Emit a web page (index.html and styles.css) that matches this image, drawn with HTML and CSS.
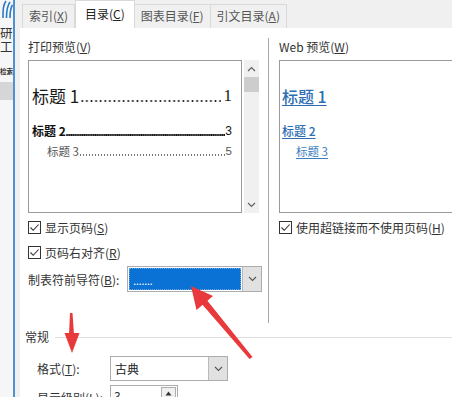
FILE: index.html
```html
<!DOCTYPE html>
<html lang="zh-CN">
<head>
<meta charset="utf-8">
<title>目录</title>
<link rel="stylesheet" href="styles.css">
</head>
<body>
<div class="screen">
  <aside class="side">
    <svg class="logo" width="13" height="18" viewBox="0 0 13 18">
      <path d="M3 18 C3 10 3 5 6 1" fill="none" stroke="#2a7bc6" stroke-width="1.6"/>
      <path d="M6.5 18 C6.5 11 7 6 10 2" fill="none" stroke="#2a7bc6" stroke-width="1.6"/>
      <path d="M10 18 C10 12 10.5 8 12.5 5" fill="none" stroke="#2a7bc6" stroke-width="1.6"/>
    </svg>
    <div class="side-chars">研<br>工</div>
    <div class="side-small">检索</div>
    <div class="side-band"></div>
  </aside>
  <div class="gutter"></div>
  <main class="dialog">
    <nav class="tabs">
      <span class="tab">索引(<u>X</u>)</span>
      <span class="tab active">目录(<u>C</u>)</span>
      <span class="tab">图表目录(<u>F</u>)</span>
      <span class="tab">引文目录(<u>A</u>)</span>
    </nav>
    <section class="panel">
      <div class="top">
        <div class="col-left">
          <div class="label">打印预览(<u>V</u>)</div>
          <div class="preview-wrap">
            <div class="preview print">
              <div class="toc l1"><span class="t">标题 1</span><span class="lead"></span><span class="n">1</span></div>
              <div class="toc l2"><span class="t">标题 2</span><span class="lead"></span><span class="n">3</span></div>
              <div class="toc l3"><span class="t">标题 3</span><span class="lead"></span><span class="n">5</span></div>
            </div>
            <div class="scrollbar">
              <div class="sb-btn">
                <svg width="9" height="6" viewBox="0 0 9 6"><polyline points="1,5 4.5,1.5 8,5" fill="none" stroke="#606060" stroke-width="1.2"/></svg>
              </div>
              <div class="sb-thumb"></div>
              <div class="sb-track"></div>
              <div class="sb-btn">
                <svg width="9" height="6" viewBox="0 0 9 6"><polyline points="1,1 4.5,4.5 8,1" fill="none" stroke="#606060" stroke-width="1.2"/></svg>
              </div>
            </div>
          </div>
          <div class="check">
            <span class="box"><svg width="11" height="11" viewBox="0 0 11 11"><polyline points="1.5,5.5 4.2,8.3 9.6,2.5" fill="none" stroke="#333" stroke-width="1.1"/></svg></span>
            <span>显示页码(<u>S</u>)</span>
          </div>
          <div class="check second">
            <span class="box"><svg width="11" height="11" viewBox="0 0 11 11"><polyline points="1.5,5.5 4.2,8.3 9.6,2.5" fill="none" stroke="#333" stroke-width="1.1"/></svg></span>
            <span>页码右对齐(<u>R</u>)</span>
          </div>
          <div class="field-row">
            <span class="field-label">制表符前导符(<u>B</u>):</span>
            <div class="select leader-select">
              <div class="select-value selected"><span class="leader-dots">.......</span></div>
              <div class="select-btn">
                <svg width="9" height="6" viewBox="0 0 9 6"><polyline points="1,1 4.5,4.5 8,1" fill="none" stroke="#555" stroke-width="1.1"/></svg>
              </div>
            </div>
          </div>
        </div>
        <div class="col-right">
          <div class="label">Web 预览(<u>W</u>)</div>
          <div class="preview web">
            <div class="web-l1">标题 1</div>
            <div class="web-l2">标题 2</div>
            <div class="web-l3">标题 3</div>
          </div>
          <div class="check">
            <span class="box"><svg width="11" height="11" viewBox="0 0 11 11"><polyline points="1.5,5.5 4.2,8.3 9.6,2.5" fill="none" stroke="#333" stroke-width="1.1"/></svg></span>
            <span>使用超链接而不使用页码(<u>H</u>)</span>
          </div>
        </div>
      </div>
      <div class="group">
        <div class="group-title"><span>常规</span></div>
        <div class="form-row">
          <span class="form-label">格式(<u>T</u>):</span>
          <div class="select format-select">
            <div class="select-value">古典</div>
            <div class="select-btn">
              <svg width="9" height="6" viewBox="0 0 9 6"><polyline points="1,1 4.5,4.5 8,1" fill="none" stroke="#555" stroke-width="1.1"/></svg>
            </div>
          </div>
        </div>
        <div class="form-row second">
          <span class="form-label">显示级别(<u>L</u>):</span>
          <div class="spin">
            <div class="spin-value">3</div>
            <div class="spin-btn">
              <svg width="7" height="5" viewBox="0 0 7 5"><polygon points="0.5,4.5 3.5,0.5 6.5,4.5" fill="#333"/></svg>
            </div>
          </div>
        </div>
      </div>
    </section>
  </main>
  <svg class="annot" width="452" height="397" viewBox="0 0 452 397">
    <polygon points="249.5,359 252.5,357 206,299 201,303" fill="#e8393c"/>
    <polygon points="191,286 213,296 196.5,310" fill="#e8393c"/>
    <polygon points="70,313 72.5,313 74,335 69,335" fill="#e8393c"/>
    <polygon points="64.5,333 79.5,333 72,353" fill="#e8393c"/>
  </svg>
</div>
</body>
</html>
```
FILE: styles.css
```css
* { box-sizing: border-box; }
html, body { margin: 0; padding: 0; background: #ffffff; }
body {
  font-family: "Noto Sans CJK SC", "Liberation Sans", sans-serif;
  font-size: 12px;
  color: #333;
}
u { text-decoration: underline; text-underline-offset: 1px; }

.screen {
  position: relative;
  width: 452px;
  height: 397px;
  overflow: hidden;
  display: flex;
  background: #ffffff;
}

/* left strip (window behind) */
.side {
  width: 15px;
  flex: none;
  background: #f6f6f6;
  border-right: 2px solid #4d93d4;
  display: flex;
  flex-direction: column;
  overflow: hidden;
}
.logo { display: block; }
.side-chars {
  margin-top: 8px;
  font-size: 12.5px;
  line-height: 14px;
  color: #333;
  white-space: nowrap;
}
.side-small {
  margin-top: 12px;
  font-size: 6.5px;
  line-height: 10px;
  white-space: nowrap;
  color: #333;
  font-weight: 700;
}
.side-band {
  margin-top: 6px;
  height: 18px;
  background: #d6d6d6;
}

.gutter { width: 5px; flex: none; background: #f0f0f0; }

.dialog {
  flex: 1;
  min-width: 0;
  display: flex;
  flex-direction: column;
  background: #f0f0f0;
}

/* tabs */
.tabs {
  height: 28px;
  flex: none;
  display: flex;
  align-items: flex-end;
  padding-left: 2px;
}
.tab {
  height: 24px;
  line-height: 22px;
  padding: 0 6px;
  border: 1px solid #d9d9d9;
  border-bottom: none;
  margin-right: -1px;
  color: #555;
  background: #f0f0f0;
  white-space: nowrap;
}
.tab.active {
  height: 28px;
  line-height: 26px;
  padding: 0 9px;
  background: #ffffff;
  color: #222;
  margin-left: 1px;
}

/* panel */
.panel {
  flex: 1;
  background: #ffffff;
  padding-left: 8px;
}
.top {
  margin-top: 10px;
  height: 285px;
  display: flex;
}
.col-left {
  width: 240px;
  flex: none;
  padding-top: 2px;
}
.col-right {
  flex: 1;
  min-width: 0;
  border-left: 1px solid #a8a8a8;
  padding-left: 10px;
  padding-top: 2px;
}
.label {
  line-height: 14px;
  color: #333;
}

.preview-wrap {
  margin-top: 6px;
  height: 153px;
  display: flex;
}
.preview {
  border: 1px solid #9a9a9a;
  background: #fff;
  height: 153px;
}
.preview.print {
  width: 214px;
  padding: 25px 9px 0 3px;
}
.toc { display: flex; white-space: nowrap; }
.toc .lead { flex: 1; min-width: 0; background-repeat: repeat-x; }
.l1 {
  font-size: 17px;
  line-height: 20px;
  color: #1a1a1a;
}
.l1 .n { font-family: "Liberation Serif", serif; padding-left: 3px; }
.l1 .lead {
  margin-left: 1px;
  background-image: radial-gradient(circle, #222 0.8px, transparent 1.2px);
  background-size: 4.6px 4px;
  background-position: 0 13px;
}
.l2 {
  margin-top: 17px;
  font-size: 12px;
  line-height: 16px;
  color: #111;
}
.l2 .t { font-weight: 700; }
.l2 .lead {
  background-image: radial-gradient(circle, #111 0.8px, transparent 1.1px);
  background-size: 2.2px 2px;
  background-position: 0 11px;
}
.l2 .n { font-family: "Liberation Sans", sans-serif; }
.l3 {
  margin-top: 4px;
  padding-left: 15px;
  font-size: 11.5px;
  line-height: 16px;
  color: #555;
}
.l3 .lead {
  background-image: radial-gradient(circle, #7a7a7a 0.6px, transparent 0.95px);
  background-size: 3px 2px;
  background-position: 0 11px;
}
.l3 .n { font-family: "Liberation Sans", sans-serif; }

.scrollbar {
  width: 15px;
  margin-left: 2px;
  background: #f0f0f0;
  display: flex;
  flex-direction: column;
}
.sb-btn {
  height: 17px;
  display: flex;
  align-items: center;
  justify-content: center;
}
.sb-thumb { height: 15px; background: #cdcdcd; }
.sb-track { flex: 1; }

.preview.web {
  margin-top: 6px;
  width: calc(100% + 20px);
  padding: 25px 0 0 2px;
}
.web-l1, .web-l2, .web-l3 {
  text-decoration: underline;
  text-underline-offset: 2px;
  width: max-content;
}
.web-l1 {
  font-size: 16px;
  line-height: 20px;
  font-weight: 500;
  color: #2d6db3;
}
.web-l2 {
  margin-top: 17px;
  font-size: 12px;
  line-height: 16px;
  color: #2d6db3;
  font-weight: 500;
}
.web-l3 {
  margin-top: 4px;
  margin-left: 14px;
  font-size: 11.5px;
  line-height: 16px;
  color: #3b7cbf;
}

/* checkboxes */
.check {
  margin-top: 4px;
  height: 20px;
  display: flex;
  align-items: center;
  gap: 4px;
  color: #333;
  white-space: nowrap;
}
.check.second { margin-top: 5px; }
.box {
  width: 13px;
  height: 13px;
  border: 1px solid #333;
  background: #fff;
  display: flex;
  align-items: center;
  justify-content: center;
  flex: none;
}

/* selects */
.field-row {
  margin-top: 4px;
  display: flex;
  align-items: center;
  height: 26px;
}
.field-label { width: 99px; flex: none; white-space: nowrap; }
.select {
  display: flex;
  border: 1px solid #adadad;
  background: #fff;
}
.leader-select { width: 135px; height: 26px; }
.select-value {
  flex: 1;
  margin: 1px;
  padding-left: 3px;
  line-height: 21px;
  color: #222;
}
.select-value.selected {
  background: #0a72d4;
  border: 1px dotted #6aa5dd;
}
.leader-dots {
  font-family: "Liberation Sans", sans-serif;
  color: #fff;
  letter-spacing: -0.6px;
  font-size: 12px;
}
.select-btn {
  width: 19px;
  flex: none;
  background: #e1e1e1;
  border-left: 1px solid #b9b9b9;
  display: flex;
  align-items: center;
  justify-content: center;
}

/* group */
.group { margin-left: -3px; }
.group-title {
  margin-top: 7px;
  display: flex;
  align-items: center;
  line-height: 14px;
  color: #333;
}
.group-title::after {
  content: "";
  flex: 1;
  border-top: 1px solid #dedede;
  margin-left: 6px;
}
.form-row {
  margin-top: 12px;
  display: flex;
  align-items: center;
  padding-left: 12px;
  height: 25px;
}
.form-row.second { margin-top: 4px; }
.form-label { width: 73px; flex: none; white-space: nowrap; color: #333; }
.format-select { width: 118px; height: 25px; }
.spin {
  width: 68px;
  height: 25px;
  border: 1px solid #adadad;
  display: flex;
  background: #fff;
}
.spin-value { flex: 1; padding-left: 3px; line-height: 20px; }
.spin-btn {
  width: 15px;
  height: 12px;
  margin: 1px;
  border: 1px solid #adadad;
  background: #f0f0f0;
  display: flex;
  align-items: center;
  justify-content: center;
}

.annot {
  position: absolute;
  left: 0;
  top: 0;
  pointer-events: none;
}
```
